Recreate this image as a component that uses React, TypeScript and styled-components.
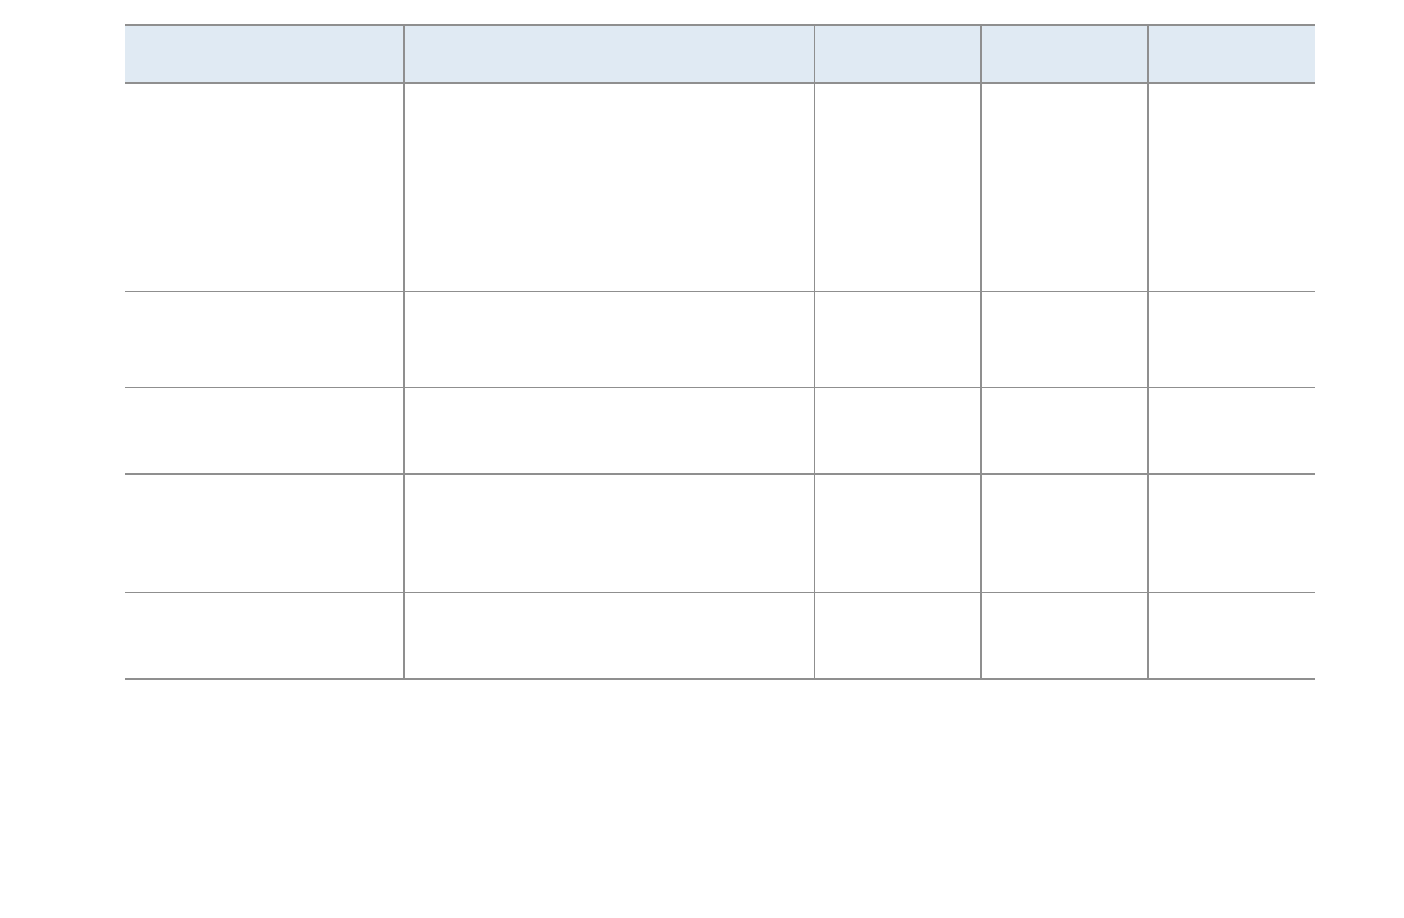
import React from "react";
import styled, { createGlobalStyle } from "styled-components";

const GlobalStyle = createGlobalStyle`
  html, body {
    margin: 0;
    padding: 0;
    background: #ffffff;
    font-family: "Liberation Sans", Arial, sans-serif;
  }
`;

const Page = styled.div`
  padding: 24px 0 0 125px;
`;

const Table = styled.div`
  width: 1190px;
  border-top: 2px solid #8f8f8f;
  display: flex;
  flex-direction: column;
`;

const Row = styled.div<{ $h: number; $bottom: number; $head?: boolean }>`
  display: grid;
  grid-template-columns: 280px 410px 167px 167px 166px;
  height: ${(p) => p.$h}px;
  border-bottom: ${(p) => p.$bottom}px solid #8f8f8f;
  background: ${(p) => (p.$head ? "#e0eaf3" : "#ffffff")};
`;

const Cell = styled.div<{ $right: number }>`
  box-sizing: border-box;
  border-right: ${(p) => p.$right}px solid #8f8f8f;
  font-size: 14px;
  color: #222;
`;

const rightBorders = [2, 1, 2, 2, 0];

const rows: { h: number; bottom: number; head?: boolean }[] = [
  { h: 56, bottom: 2, head: true },
  { h: 207, bottom: 1 },
  { h: 95, bottom: 1 },
  { h: 85, bottom: 2 },
  { h: 117, bottom: 1 },
  { h: 85, bottom: 2 },
];

export default function App() {
  return (
    <>
      <GlobalStyle />
      <Page>
        <Table>
          {rows.map((r, i) => (
            <Row key={i} $h={r.h} $bottom={r.bottom} $head={r.head}>
              {rightBorders.map((b, j) => (
                <Cell key={j} $right={b} />
              ))}
            </Row>
          ))}
        </Table>
      </Page>
    </>
  );
}
